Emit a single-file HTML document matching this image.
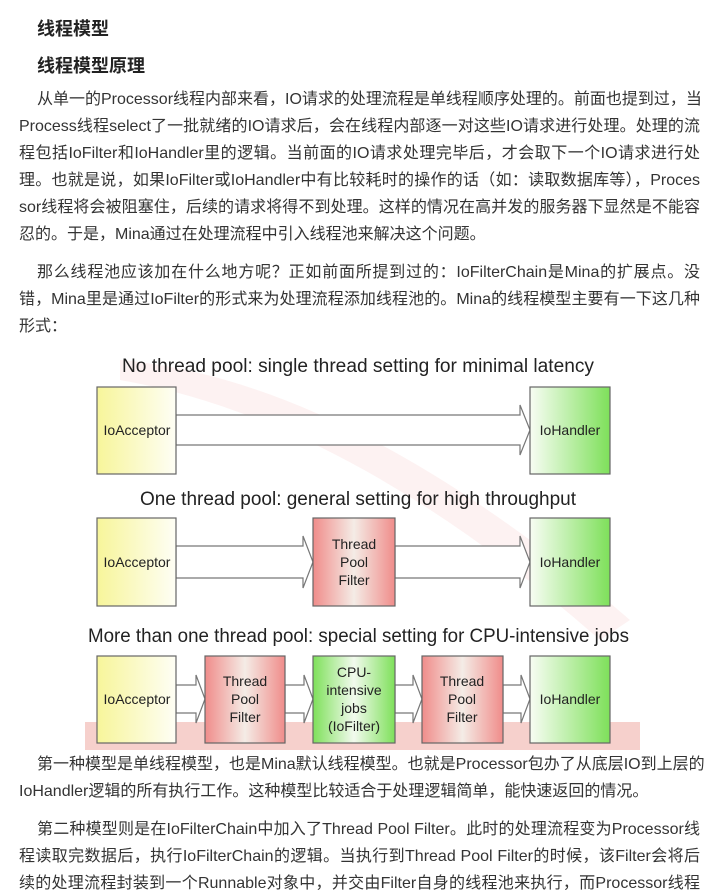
<!DOCTYPE html>
<html><head><meta charset="utf-8"><style>
body{margin:0;background:#fff;width:717px;height:892px;overflow:hidden;position:relative;font-family:"Liberation Sans","Noto Sans CJK SC",sans-serif;color:#333}
.h{position:absolute;left:37px;font-size:18px;font-weight:bold;color:#222}
.l{position:absolute;left:19px;width:681px;font-size:16px;white-space:nowrap;text-align:justify;text-align-last:justify;line-height:20px}
.l.i{left:37px;width:663px}
.l.e{text-align-last:left}
</style></head><body>
<div class="h" style="top:15px">线程模型</div>
<div class="h" style="top:52px">线程模型原理</div>

<div class="l i" style="top:90px">从单一的Processor线程内部来看，IO请求的处理流程是单线程顺序处理的。前面也提到过，当</div>
<div class="l" style="top:117px">Process线程select了一批就绪的IO请求后，会在线程内部逐一对这些IO请求进行处理。处理的流</div>
<div class="l" style="top:144px">程包括IoFilter和IoHandler里的逻辑。当前面的IO请求处理完毕后，才会取下一个IO请求进行处</div>
<div class="l" style="top:171px">理。也就是说，如果IoFilter或IoHandler中有比较耗时的操作的话（如：读取数据库等），Proces</div>
<div class="l" style="top:198px">sor线程将会被阻塞住，后续的请求将得不到处理。这样的情况在高并发的服务器下显然是不能容</div>
<div class="l e" style="top:225px">忍的。于是，Mina通过在处理流程中引入线程池来解决这个问题。</div>

<div class="l i" style="top:263px">那么线程池应该加在什么地方呢？正如前面所提到过的：IoFilterChain是Mina的扩展点。没</div>
<div class="l" style="top:290px">错，Mina里是通过IoFilter的形式来为处理流程添加线程池的。Mina的线程模型主要有一下这几种</div>
<div class="l e" style="top:317px">形式：</div>

<svg style="position:absolute;left:85px;top:348px" width="555" height="402" viewBox="85 348 555 402" font-family="Liberation Sans, sans-serif">
<defs>
<linearGradient id="y" x1="0" x2="1"><stop offset="0" stop-color="#f7f59a"/><stop offset="1" stop-color="#fefef5"/></linearGradient>
<linearGradient id="g" x1="0" x2="1"><stop offset="0" stop-color="#f8fdf4"/><stop offset="1" stop-color="#7ee05a"/></linearGradient>
<linearGradient id="r" x1="0" x2="1"><stop offset="0" stop-color="#f08c8a"/><stop offset=".5" stop-color="#f4ece6"/><stop offset="1" stop-color="#f08c8a"/></linearGradient>
<linearGradient id="c" x1="0" x2="1"><stop offset="0" stop-color="#7ee05a"/><stop offset=".5" stop-color="#f2faee"/><stop offset="1" stop-color="#7ee05a"/></linearGradient>
</defs>
<rect x="85" y="348" width="555" height="402" fill="#fff"/>
<path d="M120 360 Q350 380 630 620 L600 640 Q350 420 120 380Z" fill="#fbeaea" opacity=".6"/>
<rect x="85" y="722" width="555" height="28" fill="#f6d0cc"/>
<g font-size="19" fill="#222">
<text x="122" y="372" textLength="472" lengthAdjust="spacingAndGlyphs">No thread pool: single thread setting for minimal latency</text>
<text x="140" y="505" textLength="436" lengthAdjust="spacingAndGlyphs">One thread pool: general setting for high throughput</text>
<text x="88" y="642" textLength="541" lengthAdjust="spacingAndGlyphs">More than one thread pool: special setting for CPU-intensive jobs</text>
</g>
<g stroke="#777" stroke-width="1.2" fill="#fff">
<path d="M176 415 H520 V405 L530 430 L520 455 V445 H176Z"/>
<path d="M176 546 H303 V536 L313 562 L303 588 V578 H176Z"/>
<path d="M395 546 H520 V536 L530 562 L520 588 V578 H395Z"/>
<path d="M176 685 H196 V675 L205 699 L196 723 V713 H176Z"/>
<path d="M285 685 H304 V675 L313 699 L304 723 V713 H285Z"/>
<path d="M395 685 H413 V675 L422 699 L413 723 V713 H395Z"/>
<path d="M503 685 H521 V675 L530 699 L521 723 V713 H503Z"/>
</g>
<g stroke="#666" stroke-width="1.2">
<rect x="97" y="387" width="79" height="87" fill="url(#y)"/>
<rect x="530" y="387" width="80" height="87" fill="url(#g)"/>
<rect x="97" y="518" width="79" height="88" fill="url(#y)"/>
<rect x="313" y="518" width="82" height="88" fill="url(#r)"/>
<rect x="530" y="518" width="80" height="88" fill="url(#g)"/>
<rect x="97" y="656" width="79" height="87" fill="url(#y)"/>
<rect x="205" y="656" width="80" height="87" fill="url(#r)"/>
<rect x="313" y="656" width="82" height="87" fill="url(#c)"/>
<rect x="422" y="656" width="81" height="87" fill="url(#r)"/>
<rect x="530" y="656" width="80" height="87" fill="url(#g)"/>
</g>
<g font-size="14" fill="#222" text-anchor="middle">
<text x="137" y="435">IoAcceptor</text><text x="570" y="435">IoHandler</text>
<text x="137" y="567">IoAcceptor</text><text x="570" y="567">IoHandler</text>
<text x="354" y="549">Thread</text><text x="354" y="567">Pool</text><text x="354" y="585">Filter</text>
<text x="137" y="704">IoAcceptor</text><text x="570" y="704">IoHandler</text>
<text x="245" y="686">Thread</text><text x="245" y="704">Pool</text><text x="245" y="722">Filter</text>
<text x="462" y="686">Thread</text><text x="462" y="704">Pool</text><text x="462" y="722">Filter</text>
<text x="354" y="677">CPU-</text><text x="354" y="695">intensive</text><text x="354" y="713">jobs</text><text x="354" y="731">(IoFilter)</text>
</g>
</svg>

<div class="l i" style="top:755px">第一种模型是单线程模型，也是Mina默认线程模型。也就是Processor包办了从底层IO到上层的</div>
<div class="l e" style="top:782px">IoHandler逻辑的所有执行工作。这种模型比较适合于处理逻辑简单，能快速返回的情况。</div>

<div class="l i" style="top:820px">第二种模型则是在IoFilterChain中加入了Thread Pool Filter。此时的处理流程变为Processor线</div>
<div class="l" style="top:847px">程读取完数据后，执行IoFilterChain的逻辑。当执行到Thread Pool Filter的时候，该Filter会将后</div>
<div class="l" style="top:874px">续的处理流程封装到一个Runnable对象中，并交由Filter自身的线程池来执行，而Processor线程</div>
</body></html>
